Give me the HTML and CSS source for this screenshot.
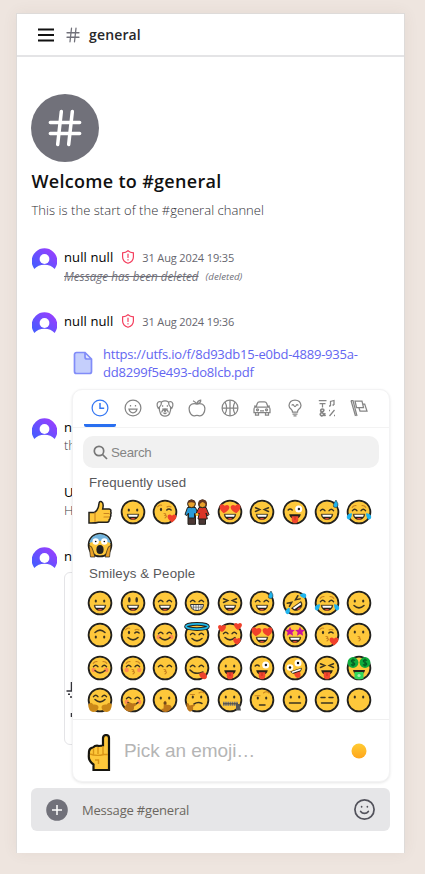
FILE: index.html
```html
<!DOCTYPE html>
<html lang="en">
<head>
<meta charset="utf-8">
<meta name="viewport" content="width=device-width">
<title>general</title>
<link rel="stylesheet" href="styles.css">
</head>
<body>
<svg class="defs" aria-hidden="true">
  <defs>
    <linearGradient id="purple" x1="1" y1="0" x2="0" y2="1"><stop offset=".15" stop-color="#9540ff"/><stop offset=".85" stop-color="#4b5aff"/></linearGradient>
    <linearGradient id="tone" x1="0" y1="0" x2="0" y2="1"><stop offset="0" stop-color="#ffcb33"/><stop offset="1" stop-color="#ffa51b"/></linearGradient>
    <g id="hash"><path d="M4 9h16M4 15h16M10 3 8 21M16 3l-2 18"/></g>
    <g id="avatar"><path d="M2.2 21A12.3 12.3 0 1 1 21.8 21C19.500 18.500 16 17 12 17S4.500 18.500 2.200 21Z" fill="url(#purple)"/><circle cx="12" cy="11.500" r="4.700" fill="#fff"/></g>
    <g id="shield"><path d="M7 .8C8.500 2.200 10.500 2.800 12.400 2.800V7c0 3.300-2.200 5.200-5.400 6.300C3.800 12.200 1.600 10.300 1.600 7V2.800C3.500 2.800 5.500 2.200 7 .8ZM7 4v3.400M7 9.700v.2"/></g>

    <g id="face"><circle cx="13" cy="13" r="11.400" fill="#fec83b" stroke="#22211d" stroke-width="1.800"/></g>
    <g id="dots" fill="#3b3320"><ellipse cx="8.800" cy="11" rx="1.100" ry="1.600"/><ellipse cx="17.200" cy="11" rx="1.100" ry="1.600"/></g>
    <g id="tall" fill="#3b3320"><ellipse cx="9.300" cy="9.800" rx="1.300" ry="2.700"/><ellipse cx="16.700" cy="9.800" rx="1.300" ry="2.700"/></g>
    <g id="arcs" class="ln"><path d="M6.500 11.600q2.200-2.800 4.400 0M15.100 11.600q2.200-2.800 4.400 0"/></g>
    <g id="squint" class="ln"><path d="M6.500 8.700l4.200 1.900-4.200 1.900M19.500 8.700l-4.200 1.900 4.200 1.900"/></g>
    <g id="winkeyes"><ellipse cx="9" cy="10.500" rx="1.100" ry="1.700" fill="#3b3320"/><path class="ln" d="M14.800 11q2-2 4.300 0"/><path class="br" d="M5.700 7.800q1.600-2.300 4-1.600M15 8q2-1.500 4 0"/></g>
    <g id="open"><path d="M7.200 15.200h11.600c-.3 3.500-2.500 5.400-5.800 5.400s-5.500-1.900-5.800-5.400Z" fill="#252019" stroke="#252019" stroke-width=".5"/><path d="M8.200 15.800h9.600l-.7 2H8.900Z" fill="#fff"/><path d="M10.500 19.800q2.500-1.700 5 0-2.500 1.200-5 0Z" fill="#f04b3a"/></g>
    <g id="smile" class="ln"><path d="M8 15.500q5 4.700 10 0"/></g>
    <g id="blush" fill="#ff795b" opacity=".75"><circle cx="6.700" cy="15" r="2.200"/><circle cx="19.300" cy="15" r="2.200"/></g>
    <g id="brows" class="br"><path d="M6.200 8.300q1.500-2 3.800-1.700M19.800 8.300q-1.500-2-3.800-1.700"/></g>
    <path id="heart" d="M0 3.300C-6-.5-2.400-4.300 0-1.700 2.400-4.300 6-.5 0 3.300Z" fill="#f0402b"/>
    <g id="hearteyes"><use href="#heart" transform="translate(7.300 9.400) rotate(8) scale(1.500)"/><use href="#heart" transform="translate(18.700 9.400) rotate(-8) scale(1.500)"/></g>
    <g id="kiss" class="br"><path d="M12 14.500q3 .2 1 1.900 3 .6 0 2.600"/></g>
    <path id="drop" d="M22 1q2.700 4.200 1.900 6-1.500 2.600-4.200 1-1.200-2.300 2.300-7Z" fill="#1fb4ee" stroke="#22211d" stroke-width=".5"/>
    <g id="tongue"><path d="M7.200 15.200h11.600c-.5 3.300-2.500 4.600-5.800 4.600s-5.300-1.300-5.800-4.600Z" fill="#252019"/><path d="M9.700 17.200h6.600v3.700q-.4 3.400-3.300 3.400t-3.300-3.400Z" fill="#f2472e"/><path d="M13 18v3" stroke="#ba2c1e" stroke-width=".8"/></g>
    <g id="winkbig"><path class="ln" d="M6.200 11q2-2 4 0"/><circle cx="16.700" cy="10" r="3.500" fill="#fff"/><circle cx="16.900" cy="10" r="1.200" fill="#222"/></g>
    <g id="tears" fill="#1fb4ee"><path d="M6 14.300q-4.700.2-5.300 3.700.3 3.300 3.100 2.200Q5.800 18.800 6 14.300ZM20 14.300q4.700.2 5.300 3.700-.3 3.300-3.100 2.200-2-1.400-2.200-5.900Z"/></g>
    <g id="halfkiss"><use href="#face"/><use href="#winkeyes"/><use href="#kiss"/><use href="#heart" transform="translate(20 19) scale(1.350)"/></g>
    <g id="joy"><use href="#face"/><use href="#arcs"/><use href="#brows"/><use href="#open"/><use href="#tears"/></g>
    <g id="lovely"><use href="#face"/><use href="#hearteyes"/><use href="#open"/></g>
    <g id="laugh"><use href="#face"/><use href="#squint"/><use href="#open"/></g>
    <g id="sweat"><use href="#face"/><use href="#arcs"/><use href="#open"/><use href="#drop"/></g>
    <g id="cheeky"><use href="#face"/><use href="#winkbig"/><use href="#tongue"/></g>
  </defs>
</svg>

<main class="app">
  <header class="bar">
    <svg class="burger" viewBox="0 0 18 14"><path d="M1 1.500h16M1 7h16M1 12.500h16"/></svg>
    <svg class="bar-hash" viewBox="0 0 24 24"><use href="#hash"/></svg>
    <h1>general</h1>
  </header>

  <section class="feed">
    <div class="badge"><svg viewBox="0 0 24 24"><use href="#hash"/></svg></div>
    <h2>Welcome to #general</h2>
    <p class="intro">This is the start of the #general channel</p>

    <article class="msg first">
      <svg class="avatar" viewBox="0 0 24 24"><use href="#avatar"/></svg>
      <div class="body">
        <div class="meta"><b>null null</b><svg class="shield" viewBox="0 0 14 14"><use href="#shield"/></svg><time>31 Aug 2024 19:35</time></div>
        <p class="deleted"><s>Message has been deleted</s><small>(deleted)</small></p>
      </div>
    </article>
    <article class="msg second">
      <svg class="avatar" viewBox="0 0 24 24"><use href="#avatar"/></svg>
      <div class="body">
        <div class="meta"><b>null null</b><svg class="shield" viewBox="0 0 14 14"><use href="#shield"/></svg><time>31 Aug 2024 19:36</time></div>
        <div class="file">
          <svg viewBox="0 0 20 24"><path d="M3.500 1.500H12L18.500 8v12.500a2 2 0 0 1-2 2h-13a2 2 0 0 1-2-2v-17a2 2 0 0 1 2-2Z" fill="#c5cffc"/><path d="M12 1.500V6a2 2 0 0 0 2 2h4.500Z" fill="#e2e7ff"/><path d="M3.500 1.500H12L18.500 8v12.500a2 2 0 0 1-2 2h-13a2 2 0 0 1-2-2v-17a2 2 0 0 1 2-2ZM12 1.500V6a2 2 0 0 0 2 2h4.500" fill="none" stroke="#818cf8" stroke-width="1.700"/></svg>
          <a>https://utfs.io/f/8d93db15-e0bd-4889-935a-<br>dd8299f5e493-do8lcb.pdf</a>
        </div>
      </div>
    </article>
    <article class="msg third">
      <svg class="avatar" viewBox="0 0 24 24"><use href="#avatar"/></svg>
      <div class="body"><div class="meta"><b>nu</b></div><p class="text">th</p></div>
    </article>
    <article class="msg fourth">
      <div class="body"><div class="meta"><b>U</b></div><p class="text">H</p></div>
    </article>
    <article class="msg fifth">
      <svg class="avatar" viewBox="0 0 24 24"><use href="#avatar"/></svg>
      <div class="body"><div class="meta"><b>nu</b></div>
        <div class="preview"><svg viewBox="0 0 10 40"><path d="M1.500 9h6M6.500 0v9M3 12.200h2M5 15h2M6.500 31v4" fill="none" stroke="#35353c" stroke-width="1.500"/></svg></div>
      </div>
    </article>
  </section>

  <footer class="composer">
    <svg class="plus" viewBox="0 0 22 22"><circle cx="11" cy="11" r="10.800" fill="#71717a"/><path d="M6 11h10M11 6v10" stroke="#fff" stroke-width="1.500"/></svg>
    <span>Message #general</span>
    <svg class="smiley" viewBox="0 0 24 24"><circle cx="12" cy="12" r="10"/><path d="M8 14s1.500 2 4 2 4-2 4-2M9 9v.2M15 9v.2"/></svg>
  </footer>

  <aside class="picker">
    <nav class="tabs">
      <span class="on"><svg viewBox="0 0 18 18"><circle cx="9" cy="9" r="7.900"/><path d="M9 4v5.200h4.200" stroke-width="1.500"/></svg></span>
      <span><svg viewBox="0 0 18 18"><circle cx="9" cy="9" r="7.900"/><path d="M5 10.200h8q-.8 3.600-4 3.600t-4-3.600ZM6.500 6v1.500M11.500 6v1.500"/></svg></span>
      <span><svg viewBox="0 0 18 18"><path d="M5.500 3Q9 .9 12.500 3q3.200-1.400 4.300 1.700.5 3-1 4.600L14.500 8q.6 3.500-.7 5.700Q12.800 17 9 17t-4.800-3.300Q2.900 11.500 3.500 8L2.200 9.300Q.7 7.700 1.200 4.700 2.300 1.600 5.500 3ZM3.500 8q2-1.600 2-5M14.500 8q-2-1.600-2-5M6.600 6.300v1.500M11.400 6.300v1.500M5.700 13.500Q6.300 10 9 10t3.300 3.500M7.500 13.500Q9 15.500 10.500 13.500"/><path d="M7.200 10.200h3.600L9 12.700Z" fill="#858585"/></svg></span>
      <span><svg viewBox="0 0 18 18"><path d="M9 5.200c4-1.500 7.900.3 7.900 4.600 0 4-2.600 7.100-4.900 7.100-1.200 0-1.700-.5-3-.5s-1.800.5-3 .5c-2.300 0-4.900-3.100-4.900-7.100 0-4.300 3.900-6.100 7.900-4.600ZM9 5.200Q8 3 5 1.700M9 4.700Q9.500 1.700 12.700 1.200q.3 3-3.700 3.500Z"/></svg></span>
      <span><svg viewBox="0 0 18 18"><circle cx="9" cy="9" r="7.900"/><path d="M9 1v16M1 9h16M4 3q3.300 6 0 12M14 3q-3.300 6 0 12"/></svg></span>
      <span><svg viewBox="0 0 18 18"><path d="M3 8l1.500-4q.4-1.200 2-1.200h5q1.600 0 2 1.200L15 8M2.500 8h13q1.500.5 1.500 2v3.500H1V10q0-1.500 1.500-2ZM2.500 13.500V16h3v-2.500M12.500 13.500V16h3v-2.500M1 7h2M17 7h-2M7 11.800h4"/><circle cx="4.500" cy="10.800" r="1"/><circle cx="13.500" cy="10.800" r="1"/></svg></span>
      <span><svg viewBox="0 0 18 18"><path d="M6.500 13q0-1.500-1.300-2.700Q3 8.700 3 6.500 3.500 1 9 1t6 5.500q0 2.200-2.200 3.800-1.300 1.200-1.300 2.700ZM6.500 15h5M7.500 16.800h3M5.700 6.500q1.200-2 2.200 0 1.100 2 2.200 0 1-2 2.200 0"/></svg></span>
      <span><svg viewBox="0 0 18 18"><path d="M.8 1.500h7.700M1.500 4.500h6M4.500 4.500v4M12.500 7V2.500l3.500-1V6M11.500 17l5-6"/><path d="M7.500 17 2.700 12q0-2 1.600-2t1.500 1.500q0 .8-2.700 2.300-1.800 2 .2 3 2 .4 4-2.600M11 7h1.500M14.500 6H16M11 11.500h1M16 16.500h1" stroke-width="1.700"/></svg></span>
      <span><svg viewBox="0 0 18 18"><path d="M1 1.500 5.500 17M1 1.500h2L7 17M5 2h7l1.500 6.500H6.500ZM12.500 5h2.200l2.300 7H10l-1-3"/></svg></span>
    </nav>
    <div class="search"><svg viewBox="0 0 15 15"><circle cx="6" cy="6" r="4.700"/><path d="m9.500 9.500 4.500 4.500"/></svg><span>Search</span></div>
    <h3 class="freq">Frequently used</h3>
    <div class="grid">
      <svg viewBox="0 0 26 26"><path d="M2 12.500h5.500Q11.500 10 12 3.500q.3-2.800 2.700-1.700Q17 3 15.700 9h6.500q2.300.3 1.500 2.700.8 1.300-.1 2.700.7 1.600-.5 2.800.4 1.800-1 2.700.3 2-2 2.300h-8.500q-3 1-9.600.8Z" transform="translate(0 1)" fill="#fec83b" stroke="#22211d" stroke-width="1.500"/><path class="br" d="M17 14.500h5M17 18h5M8 13.500v9"/></svg>
      <svg viewBox="0 0 26 26"><use href="#face"/><use href="#dots"/><use href="#open"/></svg>
      <svg viewBox="0 0 26 26"><use href="#halfkiss"/></svg>
      <svg viewBox="0 0 26 26"><g stroke="#22211d" stroke-width="1"><path d="M4 16h7.500v9.300H4ZM15 16h6.500v9.300H15Z" fill="#4b3734"/><path d="M3.500 8.500h8l2.500 6-1.500 2-2-2v4.500H4.500v-5l-1.500 2.500-2-1Z" fill="#299cda"/><path d="M15 8.500h7l3 7-1.500 1.500-1.500-3 1.300 6H14l1.200-6-1.700 2.500-1.500-2Z" fill="#da3427"/><circle cx="7.500" cy="4.800" r="3.900" fill="#e9a12c"/><circle cx="18.500" cy="4.800" r="3.900" fill="#e9a12c"/></g><path d="M3.700 4.500Q4 .7 7.500.8t3.800 3.700Q7 2 3.700 4.500ZM14.700 8Q13 .6 18.500.6T23 9q-1-5-4.500-6-2.800 1-3.800 5Z" fill="#653721"/><circle cx="13" cy="15.500" r="1.500" fill="#fec83b"/></svg>
      <svg viewBox="0 0 26 26"><use href="#lovely"/></svg>
      <svg viewBox="0 0 26 26"><use href="#laugh"/></svg>
      <svg viewBox="0 0 26 26"><use href="#cheeky"/></svg>
      <svg viewBox="0 0 26 26"><use href="#sweat"/></svg>
      <svg viewBox="0 0 26 26"><use href="#joy"/></svg>
      <svg viewBox="0 0 26 26"><use href="#face"/><path d="M2.200 11a11 11 0 0 1 21.600 0Q13 7 2.200 11Z" fill="#72b4de"/><circle cx="8.700" cy="9.500" r="3.200" fill="#fff"/><circle cx="17.300" cy="9.500" r="3.200" fill="#fff"/><circle cx="8.700" cy="9.500" r=".8"/><circle cx="17.300" cy="9.500" r=".8"/><ellipse cx="13" cy="17.500" rx="3.600" ry="4.500" fill="#222"/><path d="M2 13.500q3 0 4 5l2 6.500H3.500ZM24 13.500q-3 0-4 5l-2 6.500h4.500Z" fill="#eaa125" stroke="#22211d" stroke-width=".7"/></svg>
    </div>
    <h3 class="people">Smileys &amp; People</h3>
    <div class="grid">
      <svg viewBox="0 0 26 26"><use href="#face"/><use href="#dots"/><use href="#open"/></svg>
      <svg viewBox="0 0 26 26"><use href="#face"/><use href="#tall"/><use href="#open"/></svg>
      <svg viewBox="0 0 26 26"><use href="#face"/><use href="#arcs"/><use href="#open"/></svg>
      <svg viewBox="0 0 26 26"><use href="#face"/><use href="#arcs"/><path d="M6.500 14.500h13q-.4 6-6.500 6t-6.500-6Z" fill="#eee" stroke="#333" stroke-width="1"/><path d="M7 17.200h12M9.500 15v4M12 15v5M14.500 15v5M17 15v4" stroke="#555" stroke-width=".6"/></svg>
      <svg viewBox="0 0 26 26"><use href="#laugh"/></svg>
      <svg viewBox="0 0 26 26"><use href="#sweat"/></svg>
      <svg viewBox="0 0 26 26"><use href="#face"/><g transform="rotate(-35 13 13)"><use href="#squint"/><use href="#open"/></g><path d="M17.500 5q4-3 6.500-.7 1 3.500-1.800 4-2.200 0-4.700-3.300ZM7.500 17.500q-4 1.500-4.200 4.500.9 3 3.500 1.800 1.700-1.500.7-6.300Z" fill="#1fb4ee"/></svg>
      <svg viewBox="0 0 26 26"><use href="#joy"/></svg>
      <svg viewBox="0 0 26 26"><use href="#face"/><use href="#dots"/><use href="#smile"/></svg>

      <svg viewBox="0 0 26 26"><use href="#face"/><g transform="rotate(180 13 13)"><use href="#dots"/><use href="#smile"/></g></svg>
      <svg viewBox="0 0 26 26"><use href="#face"/><use href="#winkeyes"/><use href="#smile"/></svg>
      <svg viewBox="0 0 26 26"><use href="#face"/><use href="#blush"/><use href="#arcs"/><use href="#smile"/></svg>
      <svg viewBox="0 0 26 26"><use href="#face"/><use href="#arcs" y="1"/><use href="#smile" y="1"/><ellipse cx="13" cy="4.500" rx="11" ry="2.600" fill="#fec83b" stroke="#22211d" stroke-width="3.600"/><ellipse cx="13" cy="4.500" rx="11" ry="2.600" fill="none" stroke="#20b6e5" stroke-width="1.900"/></svg>
      <svg viewBox="0 0 26 26"><use href="#face"/><use href="#arcs"/><use href="#smile"/><use href="#heart" transform="translate(5 6) scale(1.200)"/><use href="#heart" transform="translate(21 4) scale(1.200)"/><use href="#heart" transform="translate(20 19) scale(1.150)"/></svg>
      <svg viewBox="0 0 26 26"><use href="#lovely"/></svg>
      <svg viewBox="0 0 26 26"><use href="#face"/><path id="star" d="m8 4.800 1.500 3 3.300.3-2.400 2.200.7 3.400L8 12l-3.100 1.700.7-3.400L3.200 8.100l3.300-.3Z" fill="#c9149a"/><use href="#star" x="10"/><use href="#open"/></svg>
      <svg viewBox="0 0 26 26"><use href="#halfkiss"/></svg>
      <svg viewBox="0 0 26 26"><use href="#face"/><use href="#dots" y="-1"/><use href="#kiss"/></svg>

      <svg viewBox="0 0 26 26"><use href="#face"/><use href="#blush"/><use href="#brows"/><use href="#arcs"/><use href="#smile"/></svg>
      <svg viewBox="0 0 26 26"><use href="#face"/><use href="#blush"/><use href="#brows"/><use href="#arcs"/><use href="#kiss"/></svg>
      <svg viewBox="0 0 26 26"><use href="#face"/><use href="#arcs"/><use href="#kiss"/></svg>
      <svg viewBox="0 0 26 26"><use href="#face"/><use href="#arcs"/><path class="ln" d="M6 15q5 5.500 13 2"/><path d="M15 19q3.500-3 6.500-.5 3 3.500 0 5.500-5 1-6.500-5Z" fill="#ee422c"/></svg>
      <svg viewBox="0 0 26 26"><use href="#face"/><use href="#dots"/><use href="#tongue"/></svg>
      <svg viewBox="0 0 26 26"><use href="#cheeky"/></svg>
      <svg viewBox="0 0 26 26"><use href="#face"/><circle cx="8" cy="12.500" r="3.300" fill="#fff"/><circle cx="16" cy="8" r="3.500" fill="#fff"/><circle cx="8" cy="12.500" r="1.200"/><circle cx="16" cy="8" r="1.200"/><g transform="rotate(-18 13 15)"><path d="M8 15h12q-1 4-6 4t-6-4Z" fill="#252019"/><path d="M9 15.500h10l-.7 1.500H9.700Z" fill="#fff"/><path d="M11 18h6v2.500q-.4 3-3 3t-3-3Z" fill="#f2472e"/></g></svg>
      <svg viewBox="0 0 26 26"><use href="#face"/><use href="#squint"/><use href="#tongue"/></svg>
      <svg viewBox="0 0 26 26"><use href="#face"/><circle cx="7" cy="7.500" r="5.400" fill="#0fac3c"/><circle cx="19" cy="7.500" r="5.400" fill="#0fac3c"/><path id="dollar" d="M9 5.500Q7 4 5.500 5.500 5 7 7 7.500q2.200.6 1.500 2.200Q7 11 5 9.500M7 3.500v8" fill="none" stroke="#075b24" stroke-width="1.200"/><use href="#dollar" x="12"/><path d="M7 15h12q-.5 4.500-6 4.500T7 15Z" fill="#252019"/><path d="M8.500 17h9v6.500q-4.500 2-9 0Z" fill="#31d65c"/><circle cx="13" cy="20.500" r="1.600" fill="#a9efb3"/></svg>

      <svg viewBox="0 0 26 26"><use href="#face"/><use href="#arcs" y="-2"/><use href="#smile" y="-3"/><path id="hug" d="M1.200 17.500q3-3.500 5 0 5-.5 5.300 2.700-.5 4.700-5.500 4.800-4.700-1-4.800-7.500Z" fill="#cc8918"/><use href="#hug" transform="translate(26 0) scale(-1 1)"/></svg>
      <svg viewBox="0 0 26 26"><use href="#face"/><use href="#blush"/><use href="#arcs"/><use href="#smile"/><path d="M6 18q3-4 6-1.500l4-.5q.5 2.500-2 3.500.5 4.500-4 5.300-4-.5-6-3.300Z" fill="#bd761a"/></svg>
      <svg viewBox="0 0 26 26"><use href="#face"/><use href="#dots"/><path d="M11.500 21.500 12 14.500q1.500-1.500 2.200 0l.5 3.500q4-.7 5 2-1.500 4.500-6 5-4 0-4.500-3Z" fill="#bd761a"/><circle cx="13" cy="16" r="1.500" fill="#6e481c"/></svg>
      <svg viewBox="0 0 26 26"><use href="#face"/><use href="#dots" y="-1"/><path class="ln" d="M10 17q4-2.500 8-.5"/><path class="br" d="M6.500 7.500h4M15 6q2.500-2 5 0"/><path d="M2.500 16.500q2-1.500 3 2l5-1q1.200 1.500-1.500 2.300 1 4-3 5Q2 22.500 2.500 16.500Z" fill="#bd761a"/></svg>
      <svg viewBox="0 0 26 26"><use href="#face"/><use href="#dots" y="-1"/><path d="M6 16.800h15" stroke="#777" stroke-width="4" stroke-dasharray="1.600 .6"/><path d="M6 16.800h15" stroke="#444"/><path d="M19 17h3.500l1.500 6.500h-5Z" fill="#565656"/></svg>
      <svg viewBox="0 0 26 26"><use href="#face"/><use href="#dots"/><path class="br" d="M6 8.800h5M14.500 6q3-2.500 5.500 0"/><path class="ln" d="M10.500 18h5.500"/></svg>
      <svg viewBox="0 0 26 26"><use href="#face"/><use href="#dots" y="-1"/><path class="ln" d="M7.500 16h11"/></svg>
      <svg viewBox="0 0 26 26"><use href="#face"/><path class="ln" d="M7 10.500h4M15 10.500h4M7.500 16h11"/></svg>
      <svg viewBox="0 0 26 26"><use href="#face"/><use href="#dots" y="-1"/></svg>
    </div>
    <div class="hint">
      <svg class="finger" viewBox="0 0 24 38"><path d="M2 17.500q.3-3.500 4-4 2.500-2.500 6-1.500l4-.5V4q.4-3 3.200-3 2.800.2 2.800 3v32H6.500v-5.500Q1.500 27 1.800 22Z" fill="#fec83b" stroke="#16150f" stroke-width="2.200"/><path d="M6.500 14v7M11 13v7M16 12v8M3 20q6 2.500 14 .5h4M8 26h3.500v4" fill="none" stroke="#d99516" stroke-width="1.400"/></svg>
      <span>Pick an emoji…</span>
      <svg class="tone" viewBox="0 0 16 16"><circle cx="8" cy="8" r="7.500" fill="url(#tone)"/></svg>
    </div>
  </aside>
</main>
</body>
</html>
```
FILE: styles.css
```css
* { box-sizing: border-box; margin: 0; padding: 0; }
body { background: #eee5df; font-family: "Open Sans", sans-serif; color: #111; padding: 13px 20px 21px 16px; height: 874px; overflow: hidden; }
svg { display: block; flex: none; }
.defs { position: absolute; width: 0; height: 0; }
.app { position: relative; width: 389px; height: 840px; background: #fff; border: 1px solid #dedbd9; border-bottom: 0; box-shadow: 0 0 14px rgba(100, 70, 50, .07); display: flex; flex-direction: column; }

.bar { height: 43px; flex: none; border-bottom: 2px solid #e4e4e6; display: flex; align-items: center; padding-left: 20px; }
.burger { width: 18px; height: 14px; fill: none; stroke: #111; stroke-width: 2; }
.bar-hash { width: 18px; height: 18px; margin-left: 9px; fill: none; stroke: #71717a; stroke-width: 1.7; stroke-linecap: round; }
.bar h1 { font-size: 14px; font-weight: 600; line-height: 20px; margin-left: 7px; letter-spacing: .15px; color: #27272a; }

.feed { flex: 1; padding: 37px 14px 0; overflow: hidden; }
.badge { width: 68px; height: 68px; border-radius: 50%; background: #71717a; display: grid; place-items: center; }
.badge svg { width: 44px; height: 44px; fill: none; stroke: #fff; stroke-width: 1.9; stroke-linecap: round; }
h2 { font-size: 18px; line-height: 26px; font-weight: 600; margin: 6px 0 0 .5px; letter-spacing: .3px; white-space: nowrap; }
.intro { font-size: 13px; font-weight: 300; line-height: 20px; margin: 6px 0 0 .5px; color: #303036; letter-spacing: .04px; }
.msg { display: flex; height: 64px; }
.first { margin-top: 27px; }
.second { height: 106px; }
.third { height: 65px; }
.fourth { padding-left: 26px; }
.avatar { width: 25px; height: 25px; margin: 0 .5px; }
.body { padding-left: 7px; flex: 1; min-width: 0; }
.meta { display: flex; align-items: center; height: 20px; white-space: nowrap; }
.meta b { font-size: 13px; font-weight: 400; color: #000; letter-spacing: .1px; }
.shield { width: 14px; height: 14px; margin: 0 7px 0 8px; fill: none; stroke: #f43f5e; stroke-width: 1.2; stroke-linecap: round; }
time { font-size: 11px; color: #66666e; letter-spacing: -.13px; }
.deleted { display: flex; align-items: center; height: 18px; font-size: 11.7px; font-style: italic; color: #71717a; white-space: nowrap; }
.deleted small { font-size: 9.700px; margin-left: 7px; }
.file { display: flex; align-items: center; margin: 14px 0 0 9px; font-size: 13px; line-height: 18px; letter-spacing: -.21px; color: #6366f1; white-space: nowrap; }
.file svg { width: 20px; height: 24px; margin-right: 10px; }
.text { font-size: 13px; line-height: 16px; font-weight: 300; color: #3f3f46; }
.preview { width: 160px; height: 173px; margin-top: 6px; border: 1px solid #e4e4e7; border-radius: 6px; }
.preview svg { width: 10px; height: 40px; margin-top: 109px; }

.composer { height: 43px; flex: none; margin: 0 14px 22px; border-radius: 6px; background: #e6e6e8; display: flex; align-items: center; padding: 0 14px; font-size: 13px; color: #6b6660; }
.plus { width: 22px; height: 22px; margin: 0 14px 0 1px; }
.composer span { flex: 1; letter-spacing: -.19px; }
.smiley { width: 23px; height: 23px; fill: none; stroke: #52525b; stroke-width: 1.8; stroke-linecap: round; }

.picker { position: absolute; left: 55px; top: 375px; width: 318px; height: 393px; border: 1px solid #f3f3f4; border-radius: 10px; background: #fff; box-shadow: 0 1px 3px rgba(0, 0, 0, .1); font-family: "Liberation Sans", sans-serif; display: flex; flex-direction: column; overflow: hidden; }
.tabs { display: flex; height: 38px; flex: none; padding: 0 0 0 11px; border-bottom: 1px solid #f3f3f3; }
.tabs span { width: 32.4px; height: 37px; padding-top: 1px; display: grid; place-items: center; border-bottom: 3px solid transparent; }
.tabs svg { width: 18px; height: 18px; fill: none; stroke: #858585; stroke-width: 1.25; }
.tabs .on { border-color: #296ff0; border-radius: 2px; }
.tabs .on svg { stroke: #3678f3; }
.search { margin: 8px 10px 0 10px; height: 32px; flex: none; background: #f1f1f1; border-radius: 10px; display: flex; align-items: center; padding-left: 10px; font-size: 13.3px; letter-spacing: -.3px; color: #858585; }
.search svg { width: 15px; height: 15px; margin-right: 3px; fill: none; stroke: #777; stroke-width: 1.7; }
h3 { font-size: 13.3px; line-height: 16px; font-weight: 400; color: #58585a; margin-left: 16px; flex: none; letter-spacing: .13px; }
.freq { margin-top: 7px; }
.people { margin-top: 5px; margin-bottom: 5px; }
.grid { display: grid; grid-template-columns: repeat(9, 32.4px); grid-auto-rows: 32.4px; padding-left: 11px; place-items: center; flex: none; }
.freq + .grid { margin-top: 5px; }
.grid svg { width: 26px; height: 26px; }
.ln { fill: none; stroke: #3b3320; stroke-width: 1.5; stroke-linecap: round; }
.br { fill: none; stroke: #ca8420; stroke-width: 1.1; stroke-linecap: round; }
.hint { margin-top: auto; height: 62px; flex: none; border-top: 1px solid #f0f0f0; display: flex; align-items: center; padding: 0 22px 0 14px; font-size: 19px; color: #b5b5b5; }
.finger { width: 24px; height: 38px; margin-right: 13px; margin-top: 4px; }
.hint span { flex: 1; letter-spacing: -.05px; }
.tone { width: 16px; height: 16px; }
```
